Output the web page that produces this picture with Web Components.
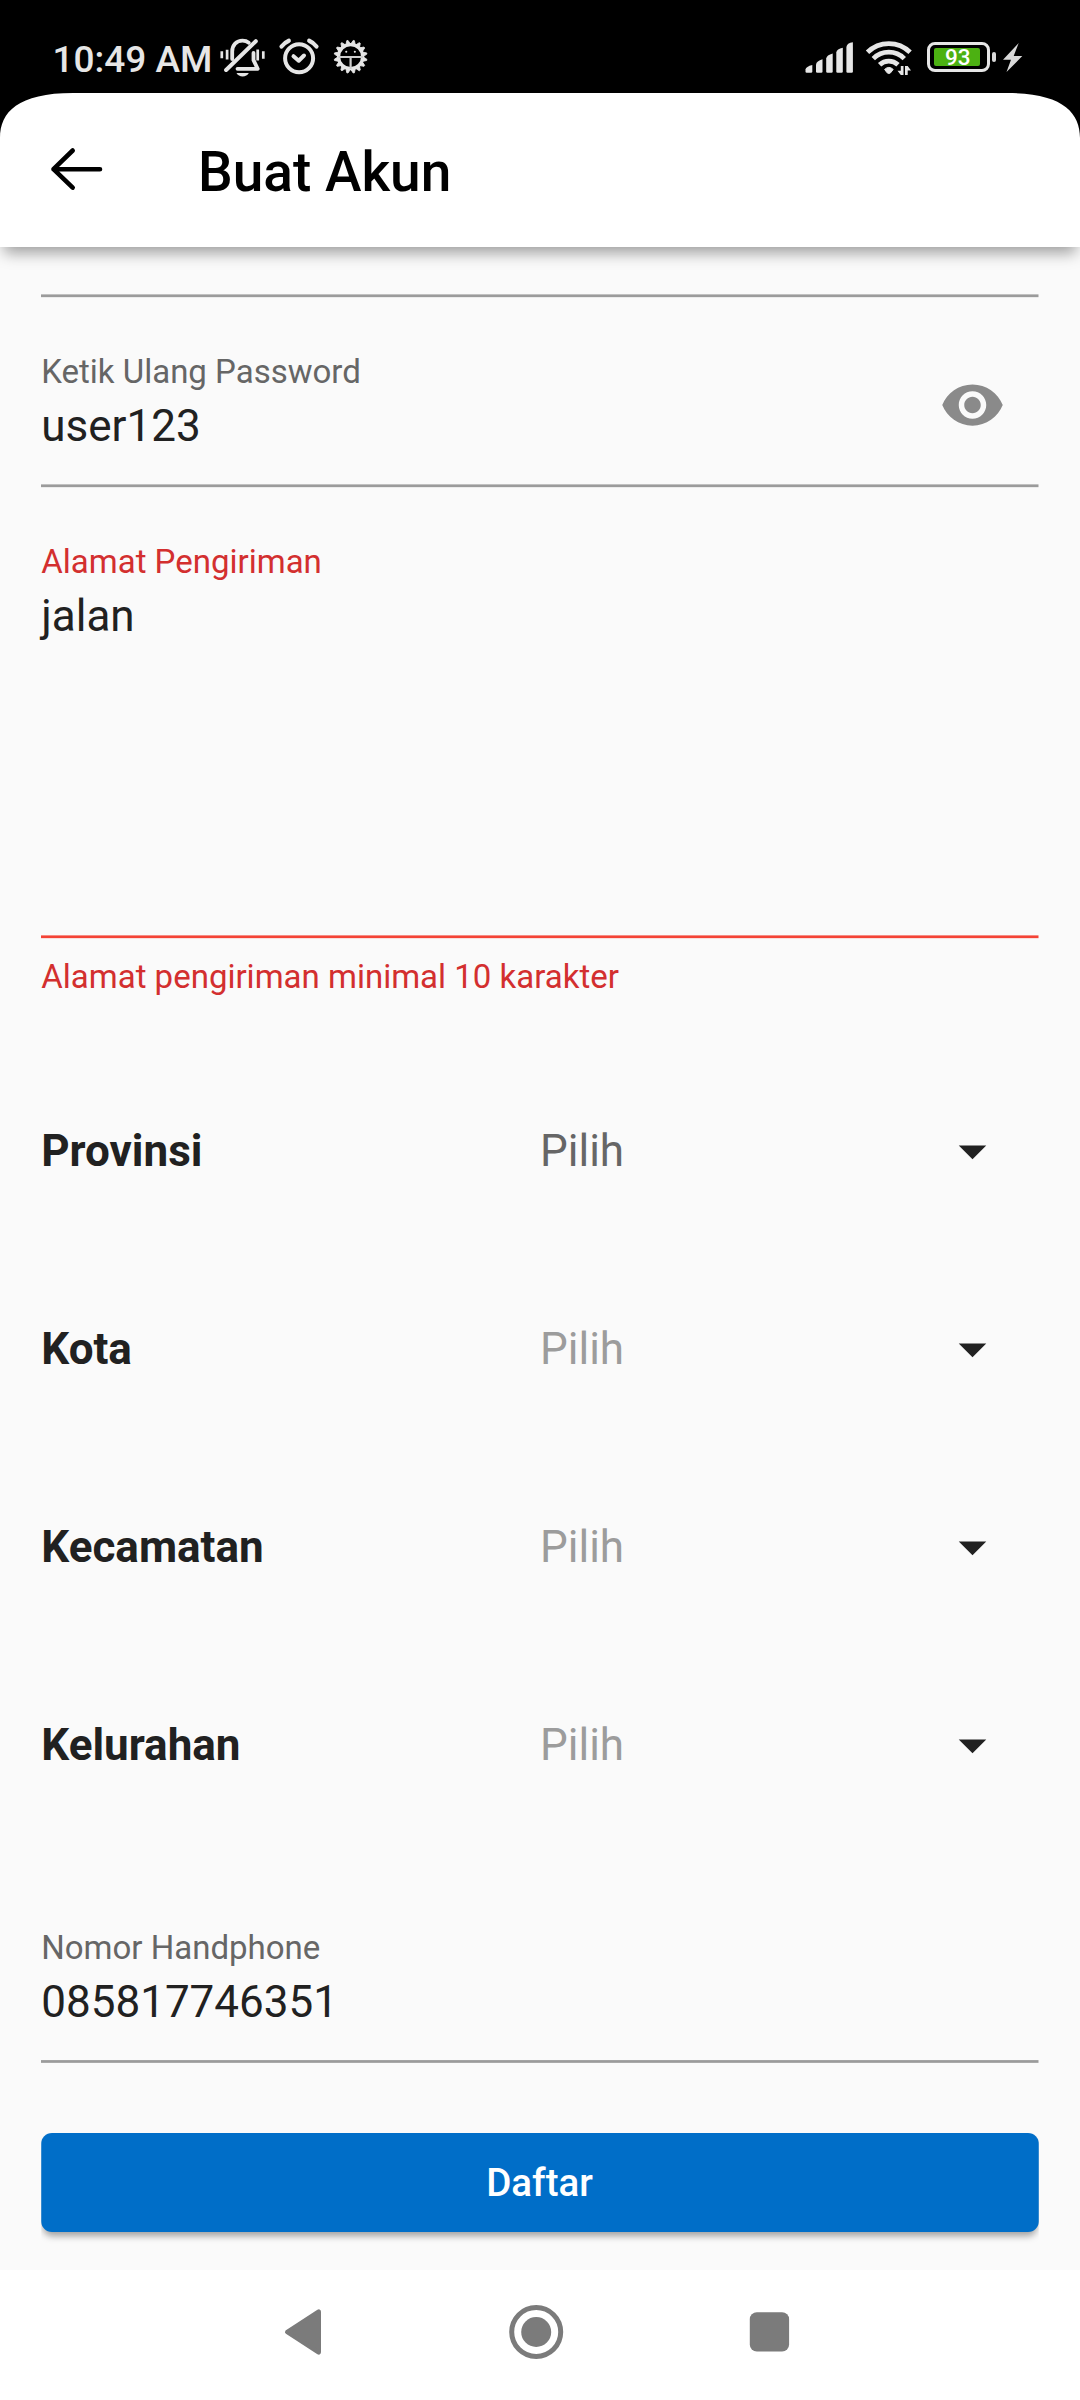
<!DOCTYPE html>
<html lang="id">
<head>
<meta charset="utf-8">
<title>Buat Akun</title>
<style>
html,body{margin:0;padding:0}
body{width:1080px;height:2400px;overflow:hidden;background:#fafafa;font-family:Roboto,"Liberation Sans",sans-serif;color:#212121}
</style>
</head>
<body>
<signup-screen></signup-screen>
<script>
const define = (name, html) => customElements.define(name, class extends HTMLElement {
  constructor() {
    super();
    const t = document.createElement('template');
    t.innerHTML = html;
    this.attachShadow({ mode: 'open' }).appendChild(t.content.cloneNode(true));
  }
});

const teeth = Array.from({ length: 16 }, (_, i) =>
  `<path d="M347.800 44.200l1.700-4h1.200l1.700 4z" transform="rotate(${i * 22.5 + 11.25} 350.100 56.700)"/>`).join('');

define('battery-level', `
<style>
:host{display:flex;align-items:center;gap:2px}
.case{box-sizing:border-box;width:63px;height:30px;border:3px solid #e6e6e6;border-radius:8px;padding:3px 3.5px}
.fill{width:46.5px;height:18px;background:#4cb112;border-radius:2px;display:flex;align-items:center;justify-content:center;font-size:22.5px;font-weight:500;line-height:18px;color:#fff;padding-left:2px;box-sizing:border-box}
.nub{width:4px;height:10px;border-radius:2px;background:#d9d9d9}
</style>
<div class="case"><div class="fill"><slot></slot></div></div><div class="nub"></div>`);

define('status-bar', `
<style>
:host{display:flex;box-sizing:border-box;height:93px;background:#000;color:#e6e6e6;padding:36px 38px 0 52.5px;justify-content:space-between;align-items:flex-start}
.side{display:flex;height:44px}
.time{font-size:37px;line-height:47px;width:166px;white-space:nowrap;font-weight:500}
svg{display:block}
battery-level{height:42px}
</style>
<div class="side">
  <div class="time">10:49 AM</div>
  <svg width="160" height="44" viewBox="218.5 36 160 44" fill="none" stroke="#e6e6e6" stroke-linecap="round" stroke-linejoin="round">
    <path d="M255.300 41.200 225.600 70" stroke-width="4"/>
    <path d="M231.700 59V51.500C231.700 45 236 40.700 242 40.700c2.500 0 4.500.6 6.300 2" stroke-width="3.800"/>
    <path d="M253 53v7.200l4.200 8.600H237" stroke-width="3.800"/>
    <path d="M236 73h12.300c-2 4.500-10.300 4.500-12.300 0z" fill="#e6e6e6" stroke="none"/>
    <path d="M221.300 51.200v7M226.600 49.700v9.800M257.200 49.500v11M262.800 51.200v7.500" stroke-width="2.700" stroke-linecap="butt"/>
    <circle cx="298.600" cy="58.300" r="14" stroke-width="4"/>
    <path d="M293 56.200l5.200 4.500 5.300-5.200" stroke-width="4"/>
    <path d="M281 46.500c2.200-2.800 4.300-4.500 7.300-5.800M316 46.500c-2.200-2.800-4.300-4.500-7.300-5.800" stroke-width="4.200"/>
    <g fill="#e6e6e6" stroke-width=".8">${teeth}</g>
    <circle cx="350.100" cy="56.700" r="12" stroke-width="3.200"/>
    <path d="M338 57h24.500M350.100 57v12" stroke-width="2.200" stroke-linecap="butt" stroke="#cfcfcf"/>
    <path d="M345.700 51.800h.1M354.300 51.800h.1" stroke-width="2"/>
  </svg>
</div>
<div class="side">
  <svg width="122" height="44" viewBox="805 36 122 44" fill="#e6e6e6">
    <path d="M805.500 69.500q.5-3 6.800-4.500v6.500q0 1.200-1.200 1.200h-4.400q-1.200 0-1.200-1.200z"/>
    <path d="M816 64.500q.5-3.500 6.500-5.200v12.200q0 1.200-1.200 1.200h-4.100q-1.200 0-1.200-1.200z"/>
    <path d="M826.200 58.500q.5-3.500 6.500-5v18q0 1.200-1.200 1.200h-4.100q-1.200 0-1.200-1.200z"/>
    <path d="M836.300 52.500q.5-3.500 6.500-4.700v23.700q0 1.200-1.200 1.200h-4.100q-1.200 0-1.200-1.200z"/>
    <path d="M846.400 47q.5-4 6.500-4.700v29.200q0 1.200-1.200 1.200h-4.100q-1.200 0-1.200-1.200z"/>
    <g fill="none" stroke="#e6e6e6" stroke-width="4.800">
      <path d="M867.500 52.300a30.500 30.500 0 0 1 42.600 0"/>
      <path d="M873.300 58.600a22 22 0 0 1 31 0"/>
      <path d="M879.600 64.800a13.500 13.500 0 0 1 18.400 0"/>
    </g>
    <path d="M884.600 69.400q4.200-4 8.600 0l-2.600 3.400q-1.700 1.500-3.500 0z" stroke="#e6e6e6" stroke-width="1"/>
    <path d="M900.800 66h2.700v9h-2.700l-3.300-4.200h3.300zM905 75h2.700v-4.500h3.300l-3.300-4.500H905z"/>
  </svg>
  <battery-level>93</battery-level>
  <svg width="46" height="44" viewBox="996 36 46 44" fill="#d9d9d9"><path d="M1018.700 43 1003 59.800h8l-4.500 12.300L1022.300 56h-8.600z"/></svg>
</div>`);

define('app-bar', `
<style>
:host{display:flex;position:relative;z-index:1;box-sizing:border-box;height:154px;background:#fff;box-shadow:0 10px 14px -4px rgba(0,0,0,.37);padding-left:42px;align-items:flex-start;color:#000}
.back{display:block;margin-top:43px}
h1{margin:47px 0 0 88px;font-size:55px;line-height:64px;font-weight:500;white-space:nowrap}
.corner{position:absolute;top:0;left:0}
.corner.r{left:auto;right:0;transform:scaleX(-1)}
</style>
<svg class="corner" width="74" height="46" viewBox="0 0 74 46"><path d="M0 0H73C18 0 0 19 0 45z"/></svg>
<svg class="corner r" width="74" height="46" viewBox="0 0 74 46"><path d="M0 0H73C18 0 0 19 0 45z"/></svg>
<svg class="back" width="68" height="66" viewBox="42 136 68 66" fill="none" stroke="#000" stroke-width="4.600" stroke-linecap="round" stroke-linejoin="round"><path d="M100 169.200H53.500M72.700 150.500 53.500 169.200 72.700 187.600"/></svg>
<h1><slot></slot></h1>`);

define('rule-line', `
<style>:host{display:block;height:4px}svg{display:block;width:100%;height:4px}rect{fill:var(--line,#9b9b9b);y:var(--offset,.4px)}</style>
<svg><rect x="0" width="100%" height="2.750"/></svg>`);

define('text-field', `
<style>
:host{display:flex;flex-direction:column;box-sizing:border-box}
.row{display:flex;justify-content:space-between;flex:1}
.label{font-size:33px;line-height:39px;color:var(--label,#666)}
.value{font-size:44px;line-height:52px;margin-top:9px;color:#212121}
</style>
<div class="row"><div><div class="label"><slot name="label"></slot></div><div class="value"><slot></slot></div></div><slot name="icon"></slot></div>
<rule-line></rule-line>
<slot name="error"></slot>`);

define('eye-icon', `
<style>:host{display:block;width:66px;height:66px;margin:19.600px 33.300px 0 0}svg{display:block}</style>
<svg width="66" height="66" viewBox="0 0 24 24" fill="#8a8a8a"><path d="M12 4.500C7 4.500 2.730 7.610 1 12c1.730 4.390 6 7.500 11 7.500s9.270-3.110 11-7.500c-1.730-4.390-6-7.500-11-7.500zM12 17c-2.760 0-5-2.240-5-5s2.240-5 5-5 5 2.240 5 5-2.240 5-5 5zm0-8c-1.660 0-3 1.340-3 3s1.340 3 3 3 3-1.340 3-3-1.340-3-3-3z" transform="translate(.18 0)"/></svg>`);

define('select-row', `
<style>
:host{display:flex;height:198px;align-items:center;font-size:44px;line-height:52px}
b{flex:1;font-weight:700;color:#212121}
.pick{flex:1;display:flex;justify-content:space-between;align-items:center;color:var(--pick,#9c9c9c)}
svg{display:block;margin-right:33.500px}
</style>
<b><slot></slot></b>
<div class="pick"><span>Pilih</span><svg width="66" height="66" viewBox="0 0 24 24" fill="#212121"><path d="M7 10l5 5 5-5z" transform="translate(.18 0)"/></svg></div>`);

define('primary-button', `
<style>
:host{display:block;clip-path:inset(-10px 0 -30px 0)}
button{all:unset;box-sizing:border-box;display:flex;width:100%;height:99px;align-items:center;justify-content:center;background:#006ec8;border-radius:11px;color:#fff;font-weight:500;font-size:38.500px;line-height:45px;padding-right:1px;box-shadow:0 6px 7px -2px rgba(0,0,0,.36)}
</style>
<button><slot></slot></button>`);

define('nav-bar', `
<style>
:host{display:flex;box-sizing:border-box;height:130px;background:#fff;padding:32px 0 0 270px;gap:173px}
svg{display:block;width:60px;height:60px;fill:#7b7b7b}
.home{margin-left:3px}
</style>
<svg viewBox="270 2302 60 60"><path d="M287 2332l31.500-20.500q.5-.3.500.5v40q0 .8-.5.5z" stroke="#7b7b7b" stroke-width="4" stroke-linejoin="round"/></svg>
<svg class="home" viewBox="506 2302 60 60"><circle cx="536.200" cy="2332" r="24.500" fill="none" stroke="#7b7b7b" stroke-width="5"/><circle cx="536.200" cy="2332" r="15"/></svg>
<svg viewBox="739 2302 60 60"><rect x="749.800" y="2312.200" width="39.300" height="39.300" rx="7"/></svg>`);

define('signup-screen', `
<style>
:host{display:flex;flex-direction:column;height:2400px;background:#fafafa}
main{flex:1;display:flex;flex-direction:column;padding:47px 41.250px 0}
.again{margin-top:54px;height:136px}
.address{--label:#d32f2f;--line:#f44336;margin-top:54px;height:454px}
.error{font-size:33px;line-height:39px;color:#d32f2f;margin-top:18px}
.selects{margin-top:56px}
.first{--pick:#666}
.phone{--offset:.1px;margin-top:84px;height:136px}
primary-button{margin-top:68.500px}
</style>
<status-bar></status-bar>
<app-bar>Buat Akun</app-bar>
<main>
  <rule-line></rule-line>
  <text-field class="again"><span slot="label">Ketik Ulang Password</span>user123<eye-icon slot="icon"></eye-icon></text-field>
  <text-field class="address"><span slot="label">Alamat Pengiriman</span>jalan<div class="error" slot="error">Alamat pengiriman minimal 10 karakter</div></text-field>
  <div class="selects">
    <select-row class="first">Provinsi</select-row>
    <select-row>Kota</select-row>
    <select-row>Kecamatan</select-row>
    <select-row>Kelurahan</select-row>
  </div>
  <text-field class="phone"><span slot="label">Nomor Handphone</span>085817746351</text-field>
  <primary-button>Daftar</primary-button>
</main>
<nav-bar></nav-bar>`);
</script>
</body>
</html>
